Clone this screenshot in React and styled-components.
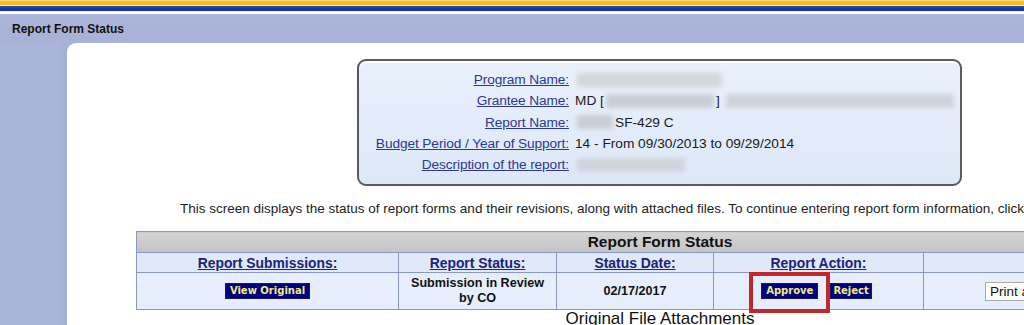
import React from 'react';
import styled, { createGlobalStyle } from 'styled-components';

const GlobalStyle = createGlobalStyle`
  html, body {
    margin: 0;
    padding: 0;
    overflow: hidden;
    background: #ffffff;
    font-family: "Liberation Sans", Arial, sans-serif;
  }
`;

const Page = styled.div`
  width: 1024px;
  height: 325px;
  overflow: hidden;
  display: flex;
  flex-direction: column;
`;

const Stripes = styled.div`
  height: 14px;
  flex-shrink: 0;
  background: linear-gradient(
    to bottom,
    #fdf3cf 0px,
    #f7c62a 1px,
    #f3b918 5px,
    #f4f0e0 5px,
    #f4f0e0 6px,
    #2f55b8 6px,
    #14339a 9px,
    #1a3a9f 11px,
    #dfe4f2 11px,
    #ffffff 12px,
    #ffffff 14px
  );
`;

const TitleBar = styled.div`
  height: 29px;
  flex-shrink: 0;
  background: linear-gradient(to bottom, #aab5d9, #a7b2d6);
  display: flex;
  align-items: center;
  padding-left: 12px;
  font-size: 12px;
  font-weight: bold;
  color: #111;
`;

const Body = styled.div`
  flex: 1;
  display: flex;
  background: #a8b3d7;
`;

const Sidebar = styled.div`
  width: 67px;
  flex-shrink: 0;
  background: linear-gradient(to right, #a9b4d8 0, #a9b4d8 58px, #a3aed4 67px);
`;

const Panel = styled.div`
  flex: 1;
  background: #ffffff;
  border-top-left-radius: 9px;
  min-width: 0;
  padding-top: 16px;
`;

const InfoBox = styled.div`
  margin-left: 290px;
  width: 605px;
  height: 127px;
  box-sizing: border-box;
  border: 2px solid #5a5a5a;
  border-radius: 9px;
  background: linear-gradient(to bottom, #e9f0fb, #dde8f8);
  box-shadow: inset 0 2px 0 #ffffff;
  padding: 8px 0 0 12px;
  display: grid;
  grid-template-columns: 198px 1fr;
  grid-auto-rows: 21.3px;
  column-gap: 6px;
  align-items: center;
  font-size: 13.7px;
`;

const Label = styled.a`
  text-align: right;
  color: #2b3990;
  text-decoration: underline;
  white-space: nowrap;
  letter-spacing: -0.1px;
`;

const Value = styled.div`
  color: #1a1a1a;
  display: flex;
  align-items: center;
  white-space: nowrap;
`;

const Blur = styled.span`
  display: inline-block;
  width: ${(p) => p.w}px;
  height: 14px;
  margin: 0 ${(p) => p.m || 0}px;
  background: ${(p) => p.bg || '#c9ced6'};
  filter: blur(2px);
  border-radius: 2px;
`;

const Intro = styled.div`
  margin-top: 15px;
  padding-left: 113px;
  font-size: 13.5px;
  color: #222;
  white-space: nowrap;
`;

const TableWrap = styled.div`
  margin-left: 69px;
  margin-top: 15px;
  width: 1048px;
`;

const Table = styled.table`
  width: 100%;
  border-collapse: collapse;
  border: 1px solid #8a97cc;
  table-layout: fixed;
`;

const Caption = styled.th`
  height: 20px;
  padding: 0;
  background: linear-gradient(to bottom, #d4d4d4, #c4c4c4);
  font-size: 15.5px;
  font-weight: bold;
  color: #111;
  text-align: center;
  border-bottom: 1px solid #8a97cc;
`;

const HeadCell = styled.th`
  height: 19px;
  padding: 0;
  background: #dfe9f8;
  border: 1px solid #8a97cc;
  font-size: 13.9px;
  font-weight: bold;
  text-align: center;
  a {
    color: #1a237e;
    text-decoration: underline;
  }
`;

const Cell = styled.td`
  height: 36px;
  padding: 0;
  background: #e6eefb;
  border: 1px solid #8a97cc;
  font-size: 12.6px;
  font-weight: bold;
  color: #111;
  text-align: ${(p) => p.align || 'center'};
  line-height: 15px;
`;

const NavButton = styled.span`
  display: inline-block;
  background: #000080;
  color: #f5e97a;
  font-family: "DejaVu Sans", Verdana, sans-serif;
  font-size: 10px;
  font-weight: bold;
  line-height: 14px;
  padding: 0 ${(p) => p.pad || 4}px;
  border: 1px solid #1a1a5a;
`;

const ActionGroup = styled.div`
  display: flex;
  justify-content: center;
  align-items: center;
  gap: 12px;
  padding-right: 4px;
`;

const Marked = styled.span`
  position: relative;
  display: inline-block;
`;

const Highlight = styled.div`
  position: absolute;
  left: -12px;
  top: -11px;
  right: -12px;
  bottom: -14px;
  border: 4px solid #c1272d;
`;

const PrintBox = styled.span`
  display: inline-block;
  margin-left: 61px;
  padding: 1px 4px;
  border: 1px solid #aaa;
  background: #fff;
  font-size: 13.5px;
  font-weight: normal;
  white-space: nowrap;
`;

const Attach = styled.div`
  text-align: center;
  font-size: 17px;
  line-height: 17px;
  color: #111;
`;

export default function App() {
  return (
    <>
      <GlobalStyle />
      <Page>
        <Stripes />
        <TitleBar>Report Form Status</TitleBar>
        <Body>
          <Sidebar />
          <Panel>
            <InfoBox>
              <Label>Program Name:</Label>
              <Value><Blur w={145} m={2} bg="#d3d7de" /></Value>
              <Label>Grantee Name:</Label>
              <Value>
                MD [<Blur w={108} m={2} />]<Blur w={228} m={6} bg="#cfd4dc" />
              </Value>
              <Label>Report Name:</Label>
              <Value><Blur w={36} m={2} /> SF-429 C</Value>
              <Label>Budget Period / Year of Support:</Label>
              <Value>14 - From 09/30/2013 to 09/29/2014</Value>
              <Label>Description of the report:</Label>
              <Value><Blur w={108} m={2} bg="#d0d5dd" /></Value>
            </InfoBox>
            <Intro>
              This screen displays the status of report forms and their revisions, along with attached files. To continue entering report form information, click
            </Intro>
            <TableWrap>
              <Table>
                <colgroup>
                  <col style={{ width: 262 }} />
                  <col style={{ width: 158 }} />
                  <col style={{ width: 157 }} />
                  <col style={{ width: 210 }} />
                  <col />
                </colgroup>
                <thead>
                  <tr>
                    <Caption colSpan={5}>Report Form Status</Caption>
                  </tr>
                  <tr>
                    <HeadCell><a>Report Submissions:</a></HeadCell>
                    <HeadCell><a>Report Status:</a></HeadCell>
                    <HeadCell><a>Status Date:</a></HeadCell>
                    <HeadCell><a>Report Action:</a></HeadCell>
                    <HeadCell />
                  </tr>
                </thead>
                <tbody>
                  <tr>
                    <Cell><NavButton>View Original</NavButton></Cell>
                    <Cell>Submission in Review<br />by CO</Cell>
                    <Cell>02/17/2017</Cell>
                    <Cell>
                      <ActionGroup>
                        <Marked>
                          <NavButton>Approve</NavButton>
                          <Highlight />
                        </Marked>
                        <NavButton pad={2}>Reject</NavButton>
                      </ActionGroup>
                    </Cell>
                    <Cell align="left"><PrintBox>Print all</PrintBox></Cell>
                  </tr>
                </tbody>
              </Table>
              <Attach>Original File Attachments</Attach>
            </TableWrap>
          </Panel>
        </Body>
      </Page>
    </>
  );
}
